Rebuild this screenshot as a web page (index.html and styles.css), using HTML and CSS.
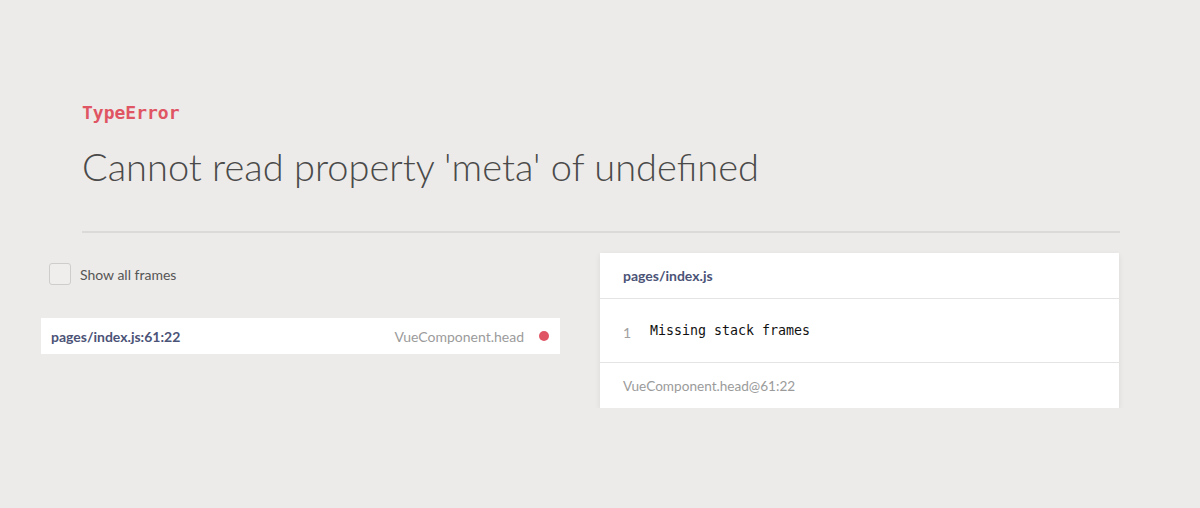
FILE: index.html
```html
<!DOCTYPE html>
<html>
<head>
<meta charset="utf-8">
<link rel="stylesheet" href="styles.css">
</head>
<body>
<div class="page">
  <header class="header">
    <div class="error-type">TypeError</div>
    <h1 class="error-message">Cannot read property 'meta' of undefined</h1>
  </header>
  <div class="main">
    <div class="frames">
      <label class="toggle">
        <span class="checkbox"></span>
        <span class="toggle-label">Show all frames</span>
      </label>
      <div class="frame">
        <span class="frame-file">pages/index.js:61:22</span>
        <span class="frame-meta">
          <span class="frame-fn">VueComponent.head</span>
          <span class="dot"></span>
        </span>
      </div>
    </div>
    <div class="card">
      <div class="card-head">pages/index.js</div>
      <div class="card-code">
        <span class="line-no">1</span>
        <span class="code">Missing stack frames</span>
      </div>
      <div class="card-foot">VueComponent.head@61:22</div>
    </div>
  </div>
</div>
</body>
</html>
```

FILE: styles.css
```css
html, body {
  margin: 0;
  padding: 0;
  background: #edebe9;
}
body {
  font-family: "Lato", "Open Sans", sans-serif;
  color: #4a4a4a;
}
.page {
  padding-top: 101px;
}
.header {
  margin: 0 80px 0 82px;
  border-bottom: 2px solid #dcdad8;
  padding-bottom: 42px;
}
.error-type {
  font-family: "DejaVu Sans Mono", monospace;
  font-weight: bold;
  font-size: 18px;
  line-height: 24px;
  color: #e05563;
}
.error-message {
  margin: 18px 0 0 0;
  font-weight: 300;
  font-size: 38px;
  line-height: 46px;
  color: #4a4a4a;
}
.main {
  display: grid;
  grid-template-columns: 1fr 1fr;
  column-gap: 40px;
  padding: 20px 81px 0 41px;
  align-items: start;
}
.frames {
  display: flex;
  flex-direction: column;
  padding-top: 9px;
}
.toggle {
  display: flex;
  align-items: center;
  gap: 9px;
  padding-left: 8px;
  height: 24px;
}
.checkbox {
  width: 20px;
  height: 20px;
  border: 1px solid #cfcdcb;
  border-radius: 3px;
  background: #efeeec;
}
.toggle-label {
  font-size: 14px;
  color: #555;
}
.frame {
  margin-top: 32px;
  height: 36px;
  background: #fff;
  display: flex;
  align-items: center;
  justify-content: space-between;
  padding: 0 11px 0 10px;
}
.frame-file {
  font-weight: bold;
  font-size: 14px;
  color: #4b5377;
}
.frame-meta {
  display: flex;
  align-items: center;
  gap: 15px;
}
.frame-fn {
  font-size: 14px;
  color: #9b9b9b;
}
.dot {
  width: 10px;
  height: 10px;
  border-radius: 50%;
  background: #e05563;
}
.card {
  background: #fff;
  box-shadow: 0 2px 6px rgba(0, 0, 0, 0.08);
}
.card-head {
  height: 45px;
  display: flex;
  align-items: center;
  padding: 0 23px;
  font-weight: bold;
  font-size: 14px;
  color: #4b5377;
  border-bottom: 1px solid #e6e4e2;
}
.card-code {
  height: 63px;
  display: flex;
  align-items: center;
  padding: 0 23px;
  border-bottom: 1px solid #e6e4e2;
}
.line-no {
  font-size: 14px;
  color: #a0a0a0;
  width: 27px;
  padding-top: 4px;
}
.code {
  font-family: "DejaVu Sans Mono", monospace;
  font-size: 13.3px;
  color: #111;
}
.card-foot {
  height: 45px;
  display: flex;
  align-items: center;
  padding: 0 23px;
  font-size: 13.6px;
  color: #9b9b9b;
}
```
